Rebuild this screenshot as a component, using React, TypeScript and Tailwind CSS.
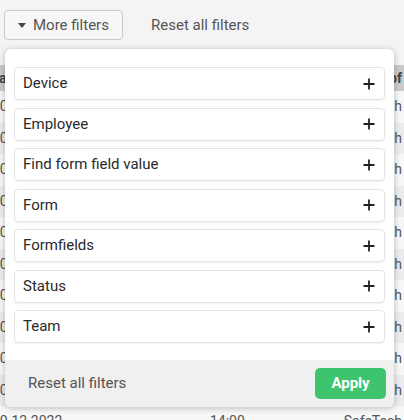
import React from 'react';

const FILTERS = ['Device', 'Employee', 'Find form field value', 'Form', 'Formfields', 'Status', 'Team'];

// background table rows (partially hidden behind the popover)
const ROWS = Array.from({ length: 11 }, (_, i) => i);

function PlusIcon() {
  return (
    <svg width="12" height="12" viewBox="0 0 12 12" className="shrink-0">
      <path d="M6 0.5v11M0.5 6h11" stroke="#222" strokeWidth="1.8" />
    </svg>
  );
}

export default function App() {
  return (
    <div
      className="relative w-[404px] h-[420px] overflow-hidden bg-[#f4f4f4] text-[15px]"
      style={{ fontFamily: 'Roboto, "Liberation Sans", sans-serif' }}
    >
      {/* Toolbar */}
      <div className="flex items-center pt-[10px] pl-[4px]">
        <button className="flex items-center h-[30px] w-[119px] rounded-[4px] border border-[#c9c9c9] bg-[#f7f7f7] pl-[13px] text-[#555]">
          <svg width="8" height="5" viewBox="0 0 8 5" className="mr-[7px]">
            <path d="M0 0h8L4 5z" fill="#444" />
          </svg>
          More filters
        </button>
        <span className="ml-[28px] text-[#555]">Reset all filters</span>
      </div>

      {/* Table behind */}
      <div className="mt-[25px] text-[14px] text-[#555]">
        <div className="flex items-center justify-between h-[26px] bg-[#cacaca] font-bold text-[#444]">
          <span className="-ml-[10px]">Date</span>
          <span className="mr-[2px]">Sof</span>
        </div>
        {ROWS.map(i => (
          <div
            key={i}
            className={`flex items-center justify-between h-[31.5px] ${i % 2 === 0 ? 'bg-[#f7f7f7]' : 'bg-[#ececec]'}`}
          >
            <span className="-ml-[8px]">10.12.2022</span>
            <span className="mr-[2px] flex items-center gap-[99px]">
              <span>14:00</span>
              <span>SafeTech</span>
            </span>
          </div>
        ))}
      </div>

      {/* Filter popover */}
      <div className="absolute left-[5px] top-[49px] w-[389px] h-[358px] rounded-[6px] bg-white shadow-[0_1px_6px_rgba(0,0,0,0.25)] overflow-hidden flex flex-col">
        <div className="flex flex-col gap-[7.5px] pt-[18px] px-[9px]">
          {FILTERS.map(f => (
            <div
              key={f}
              className="flex items-center justify-between h-[33px] rounded-[4px] border border-[#e4e4e4] shadow-[0_1px_2px_rgba(0,0,0,0.06)] pl-[8px] pr-[9px] text-[#2a2a2a]"
            >
              <span>{f}</span>
              <PlusIcon />
            </div>
          ))}
        </div>
        <div className="mt-auto flex items-center justify-between h-[47px] bg-[#f0f0f0] pl-[23px] pr-[8px]">
          <span className="text-[#555]">Reset all filters</span>
          <button className="h-[31px] w-[71px] rounded-[5px] bg-[#3ec46d] text-white font-bold">Apply</button>
        </div>
      </div>
    </div>
  );
}
